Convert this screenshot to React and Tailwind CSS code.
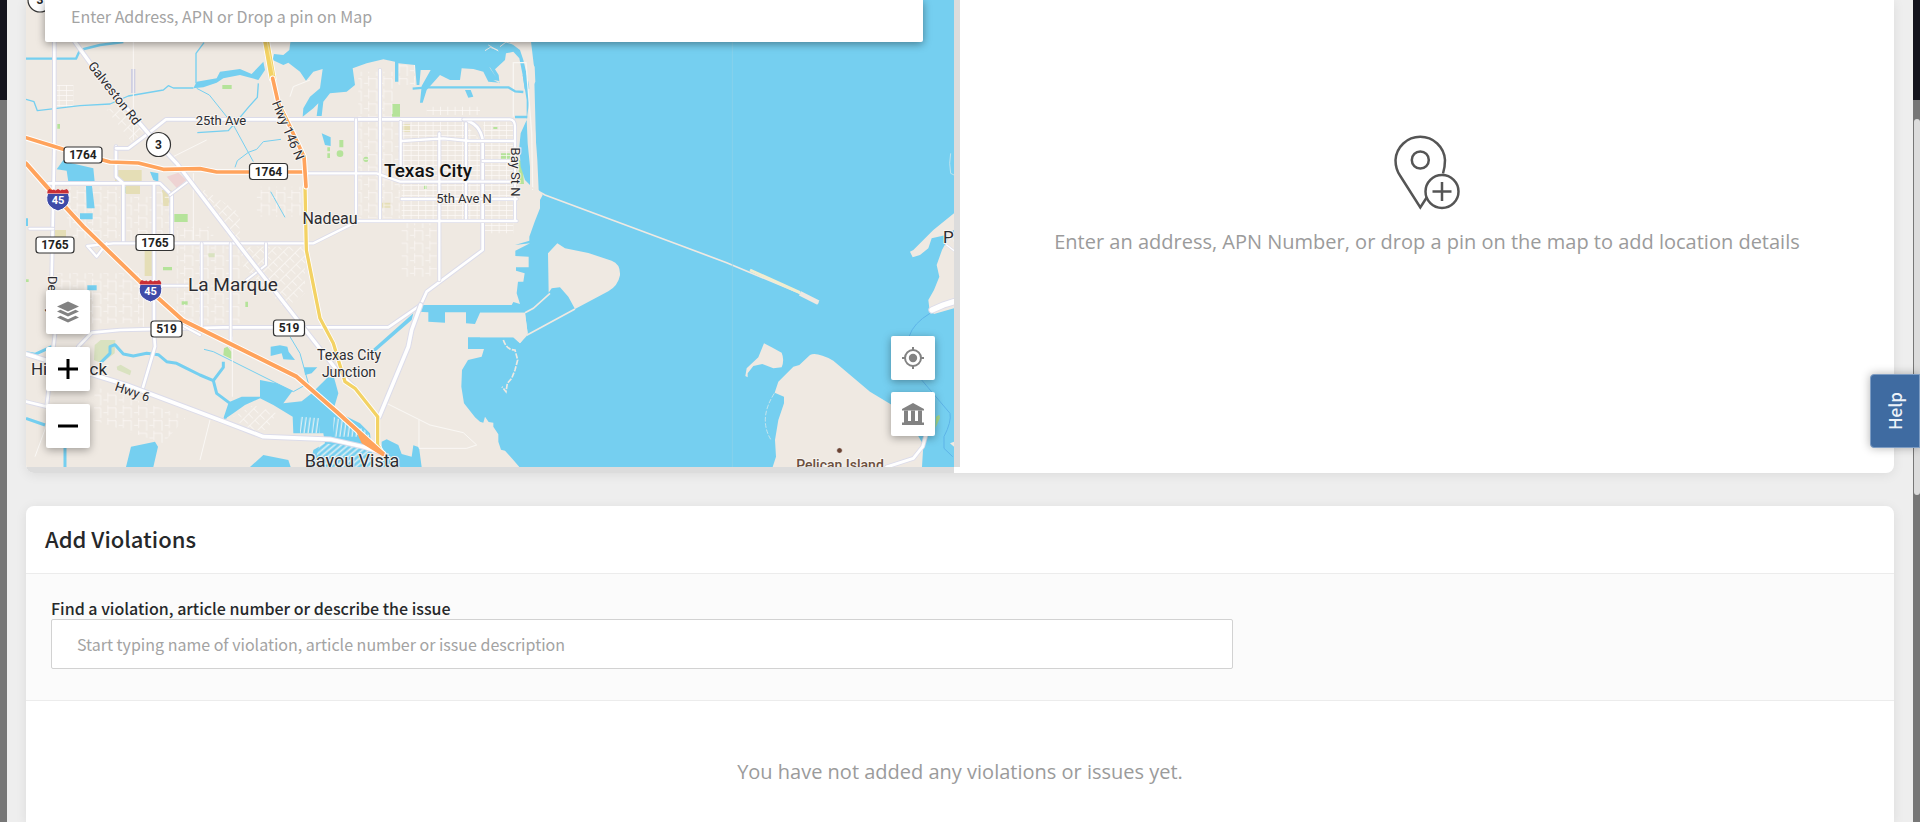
import React from "react";

const WATER = "#75cff0";
const LAND = "#efe9e2";
const DIN = "Roboto, 'Noto Sans', sans-serif";

function Road({ d, w = 8, casing = 14, color = "#ffffff", edge = "#dcdcea" }) {
  return (
    <g fill="none" strokeLinejoin="round" strokeLinecap="round">
      <path d={d} stroke={edge} strokeWidth={casing} />
      <path d={d} stroke={color} strokeWidth={w} />
    </g>
  );
}

function Label({ x, y, size = 13, weight = 400, color = "#2c2c31", anchor = "middle", rotate = 0, children }) {
  return (
    <text
      x={x}
      y={y}
      fontSize={size}
      fontWeight={weight}
      fontFamily={DIN}
      fill={color}
      stroke="#f7f4f0"
      strokeWidth="2"
      paintOrder="stroke"
      textAnchor={anchor}
      transform={rotate ? `rotate(${rotate} ${x} ${y})` : undefined}
    >
      {children}
    </text>
  );
}

function RouteBadge({ x, y, children }) {
  const w = children.length === 3 ? 31 : 38;
  return (
    <g>
      <rect x={x - w / 2} y={y - 8} width={w} height="16" rx="3" fill="#fff" stroke="#333" strokeWidth="1.2" />
      <text x={x} y={y + 4} fontSize="12" fontWeight="700" fontFamily={DIN} fill="#222" textAnchor="middle">
        {children}
      </text>
    </g>
  );
}

function Interstate({ x, y }) {
  return (
    <g transform={`translate(${x} ${y})`}>
      <path d="M-10.500-5.500Q-13 3-8 7.500Q-5 10.500 0 12Q5 10.500 8 7.500Q13 3 10.500-5.500Z" fill="#3e4ba8" stroke="#fff" strokeWidth="1" />
      <path d="M-10.500-5.500Q-11.500-8-8.500-10Q-6-8.500-4-9.500L-2.500-8.500L0-10L2.500-8.500L4-9.500Q6-8.500 8.500-10Q11.500-8 10.500-5.500Z" fill="#c92f36" />
      <text y="5" fontSize="11" fontWeight="700" fontFamily={DIN} fill="#fff" textAnchor="middle">45</text>
    </g>
  );
}

function MapCanvas() {
  return (
    <svg className="block h-full w-full" viewBox="26 0 928 467" preserveAspectRatio="xMinYMin slice" role="img" aria-label="Map of Texas City">
      <defs>
        <pattern id="blocks" width="22" height="15" patternUnits="userSpaceOnUse">
          <path d="M0 1H22M1 0V15" stroke="#fbf9f7" strokeWidth="2.5" fill="none" />
        </pattern>
        <pattern id="sparse" width="46" height="38" patternUnits="userSpaceOnUse">
          <path d="M2 0V30M0 8H26M26 8V38M34 22H46" stroke="#f9f6f3" strokeWidth="2.500" fill="none" />
        </pattern>
        <pattern id="diagonal" width="22" height="27" patternUnits="userSpaceOnUse" patternTransform="rotate(-45)">
          <path d="M0 1H22M1 0V20" stroke="#faf8f5" strokeWidth="2.500" fill="none" />
        </pattern>
        <pattern id="canals" width="13" height="13" patternUnits="userSpaceOnUse" patternTransform="rotate(-40)">
          <path d="M0 4H13" stroke="#f6f6f4" strokeWidth="5" />
        </pattern>
        <pattern id="slips" width="12" height="12" patternUnits="userSpaceOnUse" patternTransform="rotate(8)">
          <path d="M4 0V12" stroke="#f6f6f4" strokeWidth="4" />
        </pattern>
      </defs>
      <rect x="26" width="928" height="467" fill={LAND} />
      <g transform="scale(0.333333)">
        {/* parks and civic areas */}
        <g fill="#b5e39a">
          <path d="M667 255h28v12h-28zM1176 312h24v38h-24zM523 642h40v24h-40zM1018 420h12v22h-12zM982 442h8v12h-8zM982 460h8v14h-8zM172 372h8v14h-8zM1480 381h12v6h-12zM1503 460h28v16h-28zM1272 555h8v12h-8zM489 801h27v10h-27zM442 804h12v12h-12zM545 904h18v10h-18zM736 905h8v16h-8zM372 560h10v20h-10zM78 838h8v8h-8z" />
          <circle cx="1098" cy="478" r="8" />
          <circle cx="1020" cy="461" r="10" />
          <path d="M1555 478l12 8 5 66h-14zM672 1045l10-5 12 15v22l-24-12z" />
        </g>
        <g fill="#e5deb6">
          <path d="M345 510h80v38h-80zM378 552h42v30h-42zM1206 373h24v22h-24zM1145 608h26v15h-26zM486 570h28v48h-24zM162 690h36v22h-36zM434 748h22v80h-22z" />
        </g>
        <path d="M284 1035l18-15h44l-2 40-40 30-22-10zM350 1100l12-6 32 18-4 14-38-16zM625 760h20v12h-20z" fill="#d9e2c0" />
        <path d="M500 530l35-12 24 22-28 25z" fill="#eed3d3" />
        <path d="M393 207h13v72h-13z" fill="#cfcfe2" />
        {/* residential blocks */}
        <path d="M1205 365H1390L1440 420V660H1205z" fill="url(#blocks)" />
        <path d="M1450 365H1540V700H1450z" fill="url(#blocks)" />
        <path d="M1075 365H1200V655H1075zM1075 215H1180V350H1075zM1195 185H1245V255H1195z" fill="url(#sparse)" />
        <path d="M530 730H720V970H530z" fill="url(#sparse)" />
        <path d="M720 740H915V880L860 930L730 800z" fill="url(#diagonal)" />
        <path d="M600 560L720 640V720H690zM320 330L380 310L430 400L395 425z" fill="url(#diagonal)" />
        <path d="M170 560H360V715H220zM380 590H460V720H380zM470 570H510V720H470zM530 680H640V720H530z" fill="url(#sparse)" />
        <path d="M170 820H430V970H170zM1205 670H1310V830H1205zM770 560H910V650H770z" fill="url(#sparse)" />
        <path d="M285 1160L380 1190L560 1250L490 1330L280 1260z" fill="url(#sparse)" />
        <path d="M1280 320H1440V345H1280zM170 255H220V320H170z" fill="url(#blocks)" />

        {/* open water */}
        <path
          fill={WATER}
          d="M1500 0H2862V1401H1558L1540 1380L1515 1352L1503 1349L1495 1325V1303L1480 1280V1268L1466 1266L1455 1250L1450 1268L1440 1265L1425 1252L1392 1210L1384 1160L1386 1110L1404 1080L1445 1070L1452 1047L1404 1047V1012H1540L1560 1030L1580 1008L1583 1000L1575 938H1440L1425 972L1398 970V937H1335V968L1285 965V937L1255 935L1265 915H1535L1540 906L1560 912L1550 880L1554 845L1570 845L1574 820L1548 812V802H1586V770L1546 768V752L1590 730L1545 735L1588 722V710L1604 665L1620 625V600L1628 585L1616 570L1612 480L1606 400L1598 300V260L1606 245L1604 200L1594 185L1580 120z"
        />
        <path
          fill={WATER}
          d="M872 120L868 150L850 165L822 162L818 180L850 195L865 188L900 215L918 242L940 215L968 207L960 265L930 290L910 325L908 350L940 325L955 310L950 348H965L970 305L990 280L1040 275L1065 255L1058 205L1100 190L1150 178L1185 185V245H1195V190L1245 195L1250 255H1258L1262 210L1292 210L1265 258L1260 308L1268 308L1280 270L1320 225L1350 240L1380 240L1385 205L1420 207L1450 215L1465 245L1500 248L1470 205L1450 140L1462 190L1500 250L1480 240L1498 243L1496 225L1485 208L1515 180L1518 160L1540 155L1558 175L1568 225L1574 268L1590 266L1570 180L1560 150L1520 120z"
        />
        <path fill={WATER} d="M1568 225L1580 225L1588 300L1580 360L1583 430L1590 500V555L1575 540L1562 500L1558 440L1562 400L1580 360L1580 300z" />
        <path d="M1582 100L1594 200L1600 430L1602 560" stroke={LAND} strokeWidth="16" fill="none" />
        <path d="M1540 350V188H1578L1595 400L1598 570" stroke="#f8f6f2" strokeWidth="4" fill="none" />
        <path d="M1500 140l18-14 20 6M1455 152l16-10 22 8M1465 135l30 18" stroke="#eef0ee" strokeWidth="3" fill="none" />
        <g fill="none" stroke={WATER} strokeLinejoin="round">
          <path d="M1238 266L1285 262L1525 262L1545 274L1570 276M1545 351H1582M78 176H228L240 150L300 135L370 126" strokeWidth="7" />
          <path d="M588 250V160L612 128" strokeWidth="4" />
          <path d="M78 298L102 305L112 332L170 325L240 317L330 312L385 288L490 270L505 257L520 264H580" strokeWidth="4" />
          <path d="M775 250L772 292L745 322L720 352L685 392L592 398" strokeWidth="4" />
          <path d="M590 265L628 285L700 375L760 485M705 502L712 482L745 457L770 448L790 425L843 418M812 575L855 652" strokeWidth="3" />
          <path d="M78 1058L105 1063L155 1040M300 1090L330 1060V1040L345 1034L370 1062L400 1068L440 1060L475 1064L500 1085L530 1090L560 1105L600 1125L640 1142L650 1180L690 1210L675 1255M640 1142L670 1102V1085M195 1340V1401M78 1255L135 1275" strokeWidth="9" />
          <path d="M612 1048L640 1055L880 1175L925 1150L900 1060L870 1010" strokeWidth="3" />
        </g>
        <g fill={WATER}>
          <path d="M580 265L590 245L650 235L660 215L720 207L755 222L790 185L795 210L775 240L720 225L670 235L650 248L610 262z" />
          <path d="M170 508L190 480L215 490L280 505L284 545L205 545L200 512zM258 558H276L284 625H260zM240 640H278V658H240zM450 515L475 520V545L460 540zM78 655H84V678H78zM965 400L992 412V438L975 435z" />
          <path d="M1395 270L1412 270L1420 290L1405 293z" />
          <path d="M262 856H290V871H262zM812 1040L840 1036L862 1040L866 1055L885 1080L850 1078L845 1060L812 1068zM912 1102H952L935 1120L915 1125zM1110 1055L1240 940L1235 960L1125 1055z" />
          <path d="M690 1205L725 1190L780 1190V1140L830 1150L878 1172L850 1210L905 1204L960 1160L1000 1125L1015 1180L1000 1230L1080 1270L1110 1300L1120 1401H930L940 1350L975 1330L970 1300H880L878 1250L820 1215L780 1195L735 1215L700 1240L670 1260z" />
          <path d="M945 1170L985 1130L1000 1140L960 1180z" />
          <path d="M1145 1325L1160 1318L1195 1335L1205 1362L1235 1370L1240 1336L1257 1342L1265 1401H1145z" />
          <path d="M393 1340L465 1325L474 1340L460 1401H378zM750 1401L790 1365L865 1380L872 1401z" />
        </g>
        <path d="M900 1250L960 1255V1300H900zM1000 1250L1095 1290L1110 1310H1000z" fill="url(#slips)" opacity=".8" />
        <path d="M960 1330L1110 1340L1120 1401H940z" fill="url(#canals)" opacity=".8" />
        <path d="M700 1250L760 1215L830 1240L800 1290L740 1290z" fill="url(#diagonal)" />

        {/* islands and dikes */}
        <g fill={LAND}>
          <path d="M1644 760L1672 730L1695 745L1765 759L1835 782Q1862 792 1860 826Q1854 858 1825 874L1725 927L1705 890L1680 862L1655 865L1646 878z" />
          <path d="M2318 1401L2328 1370L2325 1320L2335 1260L2352 1210V1190L2324 1178L2335 1145L2380 1100L2398 1095L2430 1065Q2450 1055 2500 1082L2610 1175L2676 1215L2750 1300L2770 1335L2766 1401z" />
          <path d="M2292 1030L2315 1042L2345 1058Q2354 1080 2345 1102L2320 1105L2287 1092L2260 1098L2243 1120V1132L2236 1128L2240 1105L2275 1072z" />
          <path d="M2740 750L2800 690L2862 640V690L2850 697L2862 715V925L2802 942L2788 925L2785 900L2802 870L2818 830L2810 795L2826 750L2845 715L2835 706L2795 715L2785 745L2760 765L2738 772L2730 755z" />
          <path d="M1440 938H1575L1583 1000L1560 1030L1540 1012H1440zM2850 1330L2862 1325V1340z" />
        </g>
        <path d="M1650 880L1600 925L1575 938M1725 927L1580 1006" stroke={LAND} strokeWidth="5" fill="none" />
        <path d="M1590 560L1635 585L2040 736L2180 788L2400 880L2455 910" stroke={LAND} strokeWidth="5" fill="none" />
        <path d="M2250 810L2400 878" stroke="#f1edcf" strokeWidth="9" />
        <path d="M2400 880L2455 908" stroke={LAND} strokeWidth="14" />
        <path d="M2323 1180Q2275 1255 2312 1318" stroke="#d4e7ea" strokeWidth="2.500" fill="none" strokeDasharray="14 5" />
        <path d="M1510 1020Q1520 1050 1545 1050L1553 1080L1545 1110L1535 1135L1522 1150L1518 1175L1506 1160" stroke={LAND} strokeWidth="5" fill="none" strokeDasharray="16 4" />
        <path d="M2790 940Q2740 970 2728 1008M2765 1140L2850 1240Q2855 1265 2832 1310V1345L2858 1370" stroke="#5db4e8" strokeWidth="3" fill="none" />
        <path d="M2808 1250l10-6 2 10-14 30z" fill="#a3d98c" />
        <path d="M2852 460Q2846 490 2852 520L2862 525" stroke="#bfe3ee" strokeWidth="3" fill="none" />
        <path d="M2197 0V1401" stroke="#8fd3ea" strokeWidth="2" />

        {/* minor roads */}
        <g fill="none" stroke="#faf8f5" strokeWidth="3">
          <path d="M400 126V420M430 880V980M697 1010V1190M1160 1210L1290 1275L1390 1298L1430 1335L1400 1345H1257V1260M105 1370L160 1220M600 1380L630 1260M870 290L880 260L930 240M580 520V720M620 420L520 470" />
        </g>
        {/* arterial roads */}
        <Road d="M163 126V440L155 830L165 1000L140 1220L78 1205M145 550H480L515 585V725M370 550V725M462 550V1000L465 1040L428 1165M348 440V530L370 550" />
        <Road d="M348 445H385L445 400L498 358H1390Q1440 370 1448 420V750L1280 875L1262 915L1165 982H670L430 988L360 990L275 998L235 1040" />
        <Road d="M1140 210V655M1068 358V660M1202 365V500M1205 423L1330 415L1410 423H1545M1318 400V840M1398 370V655M1390 358H1530Q1545 360 1545 380V660M1448 483H1545M1448 545H1550M1205 597H1550M1075 663H1550M915 520H1130L1200 545H1448M320 730L290 770L262 738L340 730H940L1000 700L1075 663" w={7} casing={12} />
        <Road d="M605 730V980M692 730V1040M798 730V795L740 840M460 857H570M550 978L600 1005M510 585L570 540M88 686H160" w={6} casing={11} />
        <Road d="M225 126L300 230L445 400L530 490L740 765L830 880L1010 1110L1060 1160" w={10} casing={16} />
        <Road d="M78 1062L380 1155L665 1262L790 1310L990 1318L1090 1340L1150 1360" w={11} casing={17} />
        <Road d="M1262 915L1235 990L1225 1040L1138 1250" w={11} casing={17} />
        <Road d="M2660 1401L2740 1375L2768 1340L2782 1290" w={9} casing={14} />
        <Road d="M2796 930L2830 915L2862 905" w={16} casing={22} />
        <Road d="M2840 735L2862 752" w={4} casing={7} />
        {/* highways */}
        <Road d="M78 413L190 448L330 486L415 489L490 508L600 506L650 516H915" color="#ffa35c" edge="#fff" w={11} casing={17} />
        <Road d="M796 110L818 235" color="#f3d264" edge="#fff" w={18} casing={23} />
        <path d="M802 126L822 225" stroke="#fae9a8" strokeWidth="3" />
        <Road d="M915 560L919 750L960 955L1000 1030L1015 1080L1035 1145L1065 1165L1133 1250V1335L1145 1355" color="#f3d264" edge="#fff" w={10} casing={15} />
        <Road d="M818 235L835 310L870 380L912 470L918 560" color="#ffa35c" edge="#fff" w={11} casing={17} />
        <Road d="M78 490L140 560L250 680L420 845L550 962L890 1130L1010 1235L1150 1362" color="#ffa35c" edge="#fff" w={12} casing={18} />
        <path d="M1060 1275L1085 1330L1150 1370L1148 1355z" fill="#ffa35c" />
      </g>

      {/* labels */}
      <Label x={221} y={125}>25th Ave</Label>
      <Label x={428} y={177} size={19} weight={500} color="#111">Texas City</Label>
      <Label x={464} y={203}>5th Ave N</Label>
      <Label x={330} y={224} size={16}>Nadeau</Label>
      <Label x={233} y={291} size={19}>La Marque</Label>
      <Label x={349} y={360} size={14}>Texas City</Label>
      <Label x={349} y={377} size={14}>Junction</Label>
      <Label x={352} y={467} size={18}>Bayou Vista</Label>
      <Label x={69} y={375} size={17}>Hitchcock</Label>
      <Label x={111} y={96} rotate={52}>Galveston Rd</Label>
      <Label x={284} y={132} rotate={67}>Hwy 146 N</Label>
      <Label x={131} y={396} rotate={19}>Hwy 6</Label>
      <Label x={511} y={172} rotate={90}>Bay St N</Label>
      <Label x={48} y={276} rotate={90} anchor="start">Delany</Label>
      <Label x={943} y={243} size={17} anchor="start">Port Bolivar</Label>
      <Label x={840} y={470} size={14} weight={500} color="#6b4f40">Pelican Island</Label>
      <circle cx="839.500" cy="450.500" r="2.800" fill="#6b4332" stroke="#fff" strokeWidth=".6" />

      <RouteBadge x={83} y={155}>1764</RouteBadge>
      <RouteBadge x={268.500} y={171.500}>1764</RouteBadge>
      <RouteBadge x={55} y={245}>1765</RouteBadge>
      <RouteBadge x={155} y={242.500}>1765</RouteBadge>
      <RouteBadge x={166.500} y={329}>519</RouteBadge>
      <RouteBadge x={289} y={328}>519</RouteBadge>
      {[[158.500, 144.500], [40, 0]].map(([x, y]) => (
        <g key={x}>
          <circle cx={x} cy={y} r="12" fill="#fff" stroke="#333" strokeWidth="1.200" />
          <text x={x} y={y + 4} fontSize="12" fontWeight="700" fontFamily={DIN} fill="#222" textAnchor="middle">3</text>
        </g>
      ))}
      <Interstate x={58} y={199} />
      <Interstate x={150.500} y={290} />
    </svg>
  );
}

function MapButton({ label, children }) {
  return (
    <button type="button" aria-label={label} className="flex size-11 items-center justify-center rounded-xs bg-white text-[#828282] shadow-[0_2px_8px_rgba(0,0,0,0.35)]">
      {children}
    </button>
  );
}

function LayersIcon() {
  return (
    <svg className="size-6" viewBox="0 0 24 24" fill="currentColor" aria-hidden="true">
      <path d="M12 1.500L23 6.500L12 11.500L1 6.500z" />
      <path d="M1 11.500L4.500 9.800L12 13.200L19.500 9.800L23 11.500L12 16.500z" />
      <path d="M1 17.500L4.500 15.800L12 19.200L19.500 15.800L23 17.500L12 22.500z" />
    </svg>
  );
}

function TargetIcon() {
  return (
    <svg className="size-6" viewBox="0 0 24 24" fill="none" stroke="currentColor" strokeWidth="2" aria-hidden="true">
      <circle cx="12" cy="12" r="8" />
      <circle cx="12" cy="12" r="4.200" fill="currentColor" stroke="none" />
      <path d="M12 1V4M12 20V23M1 12H4M20 12H23" />
    </svg>
  );
}

function MuseumIcon() {
  return (
    <svg className="size-6" viewBox="0 0 24 24" fill="currentColor" aria-hidden="true">
      <path d="M12 1L23 7V8.500H1V7z" />
      <path d="M3 8.500H7V20H3zM10 8.500H14V20H10zM17 8.500H21V20H17zM3 19H21V20.500H23V23H1V20.500H3z" />
    </svg>
  );
}

function PinPlusIcon() {
  return (
    <svg className="h-[76px] w-[66px]" viewBox="0 0 66 76" fill="none" stroke="#555" strokeWidth="2.500" aria-hidden="true">
      <path d="M49 39.500Q51 33 51 26A24.800 24.800 0 0 0 1.500 26Q1.500 35 6 41.500L26.300 73.500L33 63" />
      <circle cx="26.300" cy="26" r="8.500" />
      <circle cx="48" cy="57.500" r="16.500" />
      <path d="M48 48V67M38.500 57.500H57.500" />
    </svg>
  );
}

export default function App() {
  return (
    <div className="relative min-h-screen bg-[linear-gradient(#14151d_100px,#777777_100px)] px-[7px] font-['Noto_Sans_CJK_SC','Noto_Sans',sans-serif] text-[#26282a]">
      <main className="flex min-h-screen flex-col gap-[33px] bg-[#eeeeee] px-[19px]">
        <section className="grid grid-cols-2 overflow-hidden rounded-b-lg bg-white shadow-[0_2px_12px_rgba(0,0,0,0.08)]">
          <div className="grid grid-cols-[1fr_6px] grid-rows-[467px_6px]">
            <div className="relative overflow-hidden">
              <MapCanvas />
              <div className="absolute top-0 right-[31px] left-[19px] rounded-b-xs bg-white pb-[10px] shadow-[0_2px_8px_rgba(0,0,0,0.4)]">
                <input
                  type="text"
                  aria-label="Location"
                  placeholder="Enter Address, APN or Drop a pin on Map"
                  className="block h-8 w-full px-[26px] text-[16px] leading-6 outline-none placeholder:text-[#a3a3a3]"
                />
              </div>
              <div className="absolute bottom-[19px] left-5 flex flex-col gap-[13px]">
                <MapButton label="Map layers"><LayersIcon /></MapButton>
                <MapButton label="Zoom in">
                  <svg className="size-5" viewBox="0 0 20 20" stroke="#000" strokeWidth="3" aria-hidden="true"><path d="M0 10H20M10 0V20" /></svg>
                </MapButton>
                <MapButton label="Zoom out">
                  <svg className="size-5" viewBox="0 0 20 20" stroke="#000" strokeWidth="3" aria-hidden="true"><path d="M0 10H20" /></svg>
                </MapButton>
              </div>
              <div className="absolute right-[19px] bottom-[31px] flex flex-col gap-3">
                <MapButton label="My location"><TargetIcon /></MapButton>
                <MapButton label="City limits"><MuseumIcon /></MapButton>
              </div>
            </div>
            <div className="bg-[#dcdcdc]" />
            <div className="bg-[#dcdcdc]" />
          </div>
          <div className="flex flex-col items-center gap-4 pt-[134px] pb-10 text-center">
            <PinPlusIcon />
            <p className="font-['Open_Sans',sans-serif] text-[20px] leading-8 text-[#9b9b9b]">
              Enter an address, APN Number, or drop a pin on the map to add location details
            </p>
          </div>
        </section>

        <section className="flex flex-1 flex-col rounded-t-lg bg-white shadow-[0_2px_12px_rgba(0,0,0,0.08)]">
          <h2 className="border-b border-[#ececec] px-[19px] pt-4 pb-[19px] text-[22px] leading-8 font-medium">Add Violations</h2>
          <div className="border-b border-[#ececec] bg-[#fbfbfb] px-[25px] pt-6 pb-[31px]">
            <label htmlFor="violation" className="block text-[16px] leading-[21px] font-medium">
              Find a violation, article number or describe the issue
            </label>
            <input
              id="violation"
              type="text"
              placeholder="Start typing name of violation, article number or issue description"
              className="block h-[50px] w-[65%] rounded-xs border border-[#d2d2d2] bg-white px-[25px] text-[16px] leading-6 outline-none placeholder:text-[#a3a3a3]"
            />
          </div>
          <p className="pt-[55px] text-center font-['Open_Sans',sans-serif] text-[20px] leading-8 text-[#9b9b9b]">
            You have not added any violations or issues yet.
          </p>
        </section>
      </main>

      <div className="absolute top-[119px] right-0 h-[376px] w-[6px] rounded-full bg-[#dcdcdc]" />
      <button
        type="button"
        className="absolute top-[374px] right-0 flex h-[74px] w-[50px] items-center justify-center rounded-l-sm border border-[#7d9cc3] bg-[#3f6ba1] text-[17px] leading-6 font-medium text-[#eef3f9] shadow-[0_0_10px_rgba(0,0,0,0.3)]"
      >
        <span className="rotate-180 [writing-mode:vertical-rl]">Help</span>
      </button>
    </div>
  );
}
